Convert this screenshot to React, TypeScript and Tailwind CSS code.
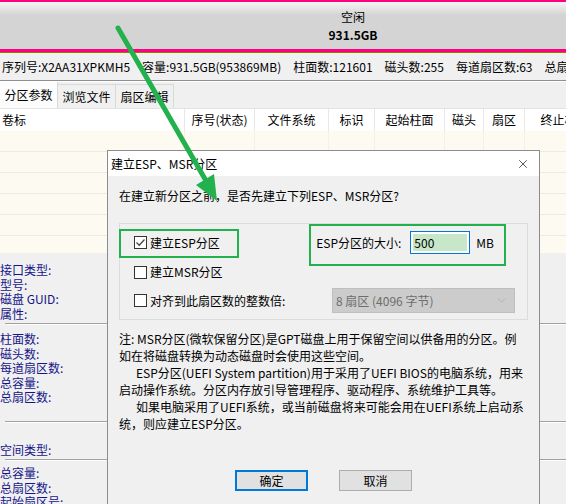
import { X, ChevronDown } from "lucide-react";

const columns = [
  { label: "卷标", w: "w-[185px]", align: "justify-start pl-[2px]" },
  { label: "序号(状态)", w: "w-[70px]", align: "justify-center" },
  { label: "文件系统", w: "w-[74px]", align: "justify-center" },
  { label: "标识", w: "w-[46px]", align: "justify-center" },
  { label: "起始柱面", w: "w-[70px]", align: "justify-center" },
  { label: "磁头", w: "w-[39px]", align: "justify-center" },
  { label: "扇区", w: "w-[41px]", align: "justify-center" },
  { label: "终止柱面", w: "w-[80px]", align: "justify-center" },
];

const infoItems = ["序列号:X2AA31XPKMH5", "容量:931.5GB(953869MB)", "柱面数:121601", "磁头数:255", "每道扇区数:63", "总扇区数:1953525168"];

function Separator() {
  return <div className="ml-[5px] h-[2px] border-t border-[#a0a0a0] border-b border-b-white" />;
}

function Labels({ items }: { items: string[] }) {
  return (
    <div className="flex flex-col text-[#15158a]">
      {items.map((t) => (
        <span key={t} className="h-[14.5px] leading-[14.5px] whitespace-nowrap">{t}</span>
      ))}
    </div>
  );
}

function CheckBox({ checked }: { checked?: boolean }) {
  return (
    <span className="w-[13px] h-[13px] border border-[#333] bg-white flex items-center justify-center shrink-0">
      {checked && (
        <svg width="11" height="11" viewBox="0 0 11 11">
          <path d="M1.5 5.5 L4.2 8.2 L9.5 2.5" fill="none" stroke="#444" strokeWidth="1.3" />
        </svg>
      )}
    </span>
  );
}

export default function App() {
  return (
    <div className="relative w-[566px] h-[504px] overflow-hidden bg-[#f0f0f0] font-['Noto_Sans_CJK_SC',sans-serif] text-[12px] text-black">
      {/* disk map bar */}
      <div className="h-[2px] bg-[#ff0080]" />
      <div className="h-[47px] bg-[linear-gradient(#f5f5f5,#d4d4d4_28%,#d4d4d4)] flex flex-col items-center justify-center pl-[140px] leading-[18px]">
        <span>空闲</span>
        <span className="font-bold">931.5GB</span>
      </div>
      <div className="h-[3px] bg-[#ff0080]" />
      <div className="h-px bg-[#8b7d00]" />

      {/* disk info */}
      <div className="h-[27px] flex items-center gap-[12px] pl-[2px] whitespace-nowrap">
        {infoItems.map((t) => (
          <span key={t}>{t}</span>
        ))}
      </div>
      <div className="h-px bg-[#8f8f8f]" />
      <div className="h-px bg-white" />

      {/* tabs */}
      <div className="h-[26px] flex items-end">
        <div className="h-[26px] w-[58px] bg-[#fcfcfc] border-r border-[#d9d9d9] flex items-center justify-center">分区参数</div>
        <div className="h-[24px] w-[58px] border border-l-0 border-b-0 border-[#d9d9d9] flex items-center justify-center">浏览文件</div>
        <div className="h-[24px] w-[58px] border border-l-0 border-b-0 border-[#d9d9d9] flex items-center justify-center">扇区编辑</div>
      </div>

      {/* partition table */}
      <div className="h-[23px] flex bg-white border-t border-[#e3e3e3]">
        {columns.map((c) => (
          <div key={c.label} className={`${c.w} shrink-0 flex items-center border-r border-[#e8e8e8] whitespace-nowrap ${c.align}`}>
            {c.label}
          </div>
        ))}
      </div>
      <div className="h-[122px] overflow-hidden bg-[#fdfbf1]">
        {[0, 1, 2, 3, 4, 5].map((r) => (
          <div key={r} className="h-[21px] flex border-b border-[#ecebe2]">
            {columns.map((c) => (
              <div key={c.label} className={`${c.w} shrink-0 border-r border-[#f3f1e6]`} />
            ))}
          </div>
        ))}
      </div>

      {/* disk properties */}
      <div className="pt-[10px]">
        <Labels items={["接口类型:", "型号:", "磁盘 GUID:", "属性:"]} />
        <div className="mt-[2px]">
          <Separator />
        </div>
        <div className="mt-[7px]">
          <Labels items={["柱面数:", "磁头数:", "每道扇区数:", "总容量:", "总扇区数:"]} />
        </div>
        <div className="mt-[16px]">
          <Separator />
        </div>
        <div className="mt-[20px]">
          <Labels items={["空间类型:"]} />
        </div>
        <div className="mt-[2px]">
          <Separator />
        </div>
        <div className="mt-[5px]">
          <Labels items={["总容量:", "总扇区数:", "起始扇区号:"]} />
        </div>
      </div>

      {/* dialog */}
      <div className="absolute left-[107px] top-[150px] w-[433px] h-[370px] border border-[#8c8c8c] bg-[#f0f0f0]">
        <div className="h-[25px] bg-white flex items-center justify-between pl-[3px] pr-[9px]">
          <span>建立ESP、MSR分区</span>
          <X size={14} strokeWidth={1.1} className="text-black" />
        </div>
        <div className="px-[11px] pt-[11px]">
          <div className="leading-[17px]">在建立新分区之前，是否先建立下列ESP、MSR分区?</div>

          <div className="mt-[19px] h-[97px] border border-[#dcdcdc] pt-[7px]">
            <div className="flex items-center h-[23px] pl-[14px] pr-[33px]">
              <CheckBox checked />
              <span className="ml-[3px]">建立ESP分区</span>
              <span className="ml-auto">ESP分区的大小:</span>
              <div className="ml-[9px] w-[60px] h-[23px] border border-[#0078d7] bg-white p-[2px]">
                <div className="h-full bg-[#c8e7c9] pl-px leading-[17px]">500</div>
              </div>
              <span className="ml-[6px]">MB</span>
            </div>
            <div className="flex items-center h-[14px] mt-[11px] pl-[14px]">
              <CheckBox />
              <span className="ml-[3px]">建立MSR分区</span>
            </div>
            <div className="flex items-center h-[25px] mt-[9px] pl-[14px] pr-[12px]">
              <CheckBox />
              <span className="ml-[3px]">对齐到此扇区数的整数倍:</span>
              <div className="ml-auto w-[183px] h-[25px] bg-[#cccccc] border border-[#bfbfbf] flex items-center pl-[3px] pr-[6px] text-[#6d6d6d]">
                <span>8 扇区 (4096 字节)</span>
                <ChevronDown size={13} strokeWidth={1} className="ml-auto text-[#9a9a9a]" />
              </div>
            </div>
          </div>

          <div className="mt-[10px] leading-[17px] whitespace-nowrap">
            <div>注: MSR分区(微软保留分区)是GPT磁盘上用于保留空间以供备用的分区。例</div>
            <div>如在将磁盘转换为动态磁盘时会使用这些空间。</div>
            <div className="pl-[17px]">ESP分区(UEFI System partition)用于采用了UEFI BIOS的电脑系统，用来</div>
            <div>启动操作系统。分区内存放引导管理程序、驱动程序、系统维护工具等。</div>
            <div className="pl-[17px]">如果电脑采用了UEFI系统，或当前磁盘将来可能会用在UEFI系统上启动系</div>
            <div>统，则应建立ESP分区。</div>
          </div>

          <div className="mt-[38px] flex gap-[31px] pl-[116px]">
            <button className="w-[73px] h-[21px] border-2 border-[#0078d7] bg-[#e1e1e1] flex items-center justify-center">确定</button>
            <button className="w-[73px] h-[21px] border border-[#adadad] bg-[#e1e1e1] flex items-center justify-center">取消</button>
          </div>
        </div>
      </div>

      {/* annotations */}
      <div className="absolute left-[119px] top-[229px] w-[120px] h-[29px] border-2 border-[#22b14c]" />
      <div className="absolute left-[309px] top-[224px] w-[197px] h-[42px] border-2 border-[#22b14c]" />
      <svg className="absolute left-0 top-0 pointer-events-none" width="566" height="504">
        <line x1="118" y1="28" x2="205" y2="179" stroke="#22b14c" strokeWidth="5" strokeLinecap="round" />
        <polygon points="217,201 196,185 214,174" fill="#22b14c" />
      </svg>
    </div>
  );
}
